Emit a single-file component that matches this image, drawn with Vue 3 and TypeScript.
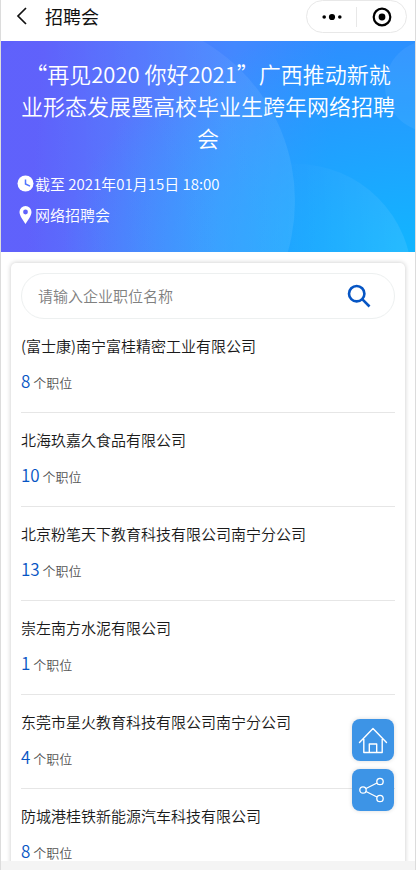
<script setup lang="ts">
import { ref } from 'vue'

interface Company {
  name: string
  jobs: number
}

const keyword = ref('')

const companies: Company[] = [
  { name: '(富士康)南宁富桂精密工业有限公司', jobs: 8 },
  { name: '北海玖嘉久食品有限公司', jobs: 10 },
  { name: '北京粉笔天下教育科技有限公司南宁分公司', jobs: 13 },
  { name: '崇左南方水泥有限公司', jobs: 1 },
  { name: '东莞市星火教育科技有限公司南宁分公司', jobs: 4 },
  { name: '防城港桂铁新能源汽车科技有限公司', jobs: 8 },
]
</script>

<template>
  <div class="page" lang="zh-CN">
    <header class="nav">
      <button class="back" type="button" aria-label="返回">
        <svg width="12" height="18" viewBox="0 0 12 18" fill="none" stroke="#111" stroke-width="1.7">
          <path d="M10 1 2 9l8 8" />
        </svg>
      </button>
      <span class="nav-title">招聘会</span>
      <div class="capsule">
        <button type="button" aria-label="更多">
          <svg width="20" height="8" viewBox="0 0 20 8" fill="#000">
            <circle cx="2.2" cy="4" r="1.8" />
            <circle cx="10" cy="4" r="3.1" />
            <circle cx="17.8" cy="4" r="1.8" />
          </svg>
        </button>
        <button type="button" aria-label="关闭">
          <svg width="20" height="20" viewBox="0 0 20 20">
            <circle cx="10" cy="10" r="8.3" fill="none" stroke="#000" stroke-width="2.2" />
            <circle cx="10" cy="10" r="3.4" fill="#000" />
          </svg>
        </button>
      </div>
    </header>

    <section class="banner">
      <svg class="bubbles" viewBox="0 0 416 211" preserveAspectRatio="xMidYMid slice" aria-hidden="true">
        <defs>
          <linearGradient id="bubble" x1="0" y1="0" x2="1" y2="0">
            <stop offset="0.3" stop-color="#fff" stop-opacity="0.01" />
            <stop offset="1" stop-color="#fff" stop-opacity="0.08" />
          </linearGradient>
          <linearGradient id="bubble-low" x1="0" y1="0" x2="1" y2="0">
            <stop offset="0.45" stop-color="#fff" stop-opacity="0" />
            <stop offset="1" stop-color="#fff" stop-opacity="0.09" />
          </linearGradient>
        </defs>
        <circle cx="110" cy="160" r="185" fill="url(#bubble)" />
        <circle cx="296" cy="239" r="116" fill="url(#bubble-low)" />
        <circle cx="431" cy="45" r="46" fill="#fff" fill-opacity="0.06" />
      </svg>
      <h1>“再见2020 你好2021”广西推动新就业形态发展暨高校毕业生跨年网络招聘会</h1>
      <p class="meta">
        <svg width="18" height="18" viewBox="0 0 18 18">
          <circle cx="8.500" cy="8.500" r="8" fill="#fff" />
          <path d="M8.500 4.500v4.500l4.500 2.200" fill="none" stroke="#5075ff" stroke-width="1.5" />
        </svg>
        截至 2021年01月15日 18:00
      </p>
      <p class="meta">
        <svg width="18" height="18" viewBox="0 0 18 18">
          <path fill="#fff" fill-rule="evenodd" d="M8.500 0a6 6 0 0 0-6 6c0 4 4 8.500 6 12 2-3.500 6-8 6-12a6 6 0 0 0-6-6Zm0 3.600a2.400 2.400 0 1 1 0 4.800 2.400 2.400 0 0 1 0-4.800Z" />
        </svg>
        网络招聘会
      </p>
    </section>

    <main class="content">
      <div class="card">
        <form class="search" role="search" @submit.prevent>
          <input v-model="keyword" type="text" placeholder="请输入企业职位名称" aria-label="请输入企业职位名称" />
          <button type="submit" aria-label="搜索">
            <svg width="24" height="24" viewBox="0 0 24 24" fill="none" stroke="#0655c4" stroke-width="2.6">
              <circle cx="9.700" cy="9.700" r="7.700" />
              <path d="m15.200 15.200 7.300 7.300" />
            </svg>
          </button>
        </form>
        <ul class="list">
          <li v-for="company in companies" :key="company.name">
            <a href="#">
              <span class="name">{{ company.name }}</span>
              <span class="count"><b>{{ company.jobs }}</b> 个职位</span>
            </a>
          </li>
        </ul>
      </div>
    </main>

    <div class="bottom"></div>

    <nav class="floating">
      <a href="#" aria-label="首页">
        <svg width="30" height="30" viewBox="0 0 30 30" fill="none" stroke="#fff" stroke-width="1.4" stroke-linejoin="round" stroke-linecap="round">
          <path d="M1.500 17.500 15 3.500l13.500 14M5.800 14v13.500h18.400V14M11.300 27.500v-8.500h7.400v8.500" />
        </svg>
      </a>
      <button type="button" aria-label="分享">
        <svg width="30" height="30" viewBox="0 0 30 30" fill="none" stroke="#fff" stroke-width="1.3">
          <circle cx="5" cy="15" r="3.200" />
          <circle cx="22" cy="6.500" r="3.200" />
          <circle cx="22" cy="23.500" r="3.200" />
          <path d="m8 13.500 11-5.500M8 16.500l11 5.500" />
        </svg>
      </button>
    </nav>
  </div>
</template>

<style>
body {
  background: #fff;
}
</style>

<style scoped>
.page {
  box-sizing: border-box;
  display: flex;
  flex-direction: column;
  height: 100vh;
  overflow: hidden;
  border: solid #dcdcdc;
  border-width: 0 1px;
  font-family: "Noto Sans CJK SC", sans-serif;
  font-weight: 350;
  color: #1a1a1a;
}

button {
  display: flex;
  align-items: center;
  justify-content: center;
  padding: 0;
  border: 0;
  background: none;
  cursor: pointer;
}

a {
  color: inherit;
  text-decoration: none;
}

svg {
  display: block;
  flex: none;
}

.nav {
  box-sizing: border-box;
  flex: none;
  display: flex;
  align-items: flex-start;
  height: 41px;
  padding: 0 8px 0 14px;
}

.back {
  width: 14px;
  height: 32px;
}

.nav-title {
  flex: 1;
  padding-left: 16px;
  font-size: 18px;
  font-weight: 400;
  line-height: 32px;
  color: #111;
}

.capsule {
  box-sizing: border-box;
  display: flex;
  align-items: center;
  width: 101px;
  height: 33px;
  border: 1px solid #e8e8e8;
  border-radius: 17px;
}

.capsule button {
  flex: 1;
  height: 20px;
}

.capsule button + button {
  border-left: 1px solid #e8e8e8;
}

.banner {
  position: relative;
  flex: none;
  padding: 16px 16px 22px;
  background:
    radial-gradient(ellipse 85% 110% at 100% 100%, rgba(14, 186, 255, 0.9) 0%, rgba(14, 186, 255, 0) 100%),
    linear-gradient(95deg, #5e60fb 10%, #4388ff 54%, #2f8cff 78%);
  color: #fff;
}

.bubbles {
  position: absolute;
  inset: 0;
  width: 100%;
  height: 100%;
}

.banner h1 {
  position: relative;
  margin: 0 0 15px;
  font-size: 22px;
  font-weight: inherit;
  line-height: 32px;
  text-align: center;
}

.meta {
  position: relative;
  display: flex;
  align-items: center;
  margin: 0;
  font-size: 15px;
  line-height: 31px;
}

.content {
  flex: 1;
  min-height: 0;
  padding: 11px 10px 0;
  overflow: hidden;
}

.card {
  padding: 10px 10px 0;
  border-radius: 5px;
  background: #fff;
  box-shadow: 0 0 5px rgba(0, 0, 0, 0.22);
}

.search {
  box-sizing: border-box;
  display: flex;
  align-items: center;
  height: 46px;
  padding: 0 23px 0 16px;
  border: 1px solid #edf0f0;
  border-radius: 24px;
}

.search input {
  flex: 1;
  min-width: 0;
  padding: 0;
  border: 0;
  outline: 0;
  background: none;
  font-family: inherit;
  font-size: 15px;
  font-weight: inherit;
  line-height: 24px;
  color: #222;
}

.search input::placeholder {
  color: #808080;
  opacity: 1;
}

.list {
  margin: 0;
  padding: 0;
  list-style: none;
}

.list li {
  border-bottom: 1px solid #e6e6e6;
}

.list a {
  display: flex;
  flex-direction: column;
  gap: 11px;
  padding: 15px 0 17px;
}

.name {
  font-size: 15px;
  line-height: 24px;
}

.count {
  font-size: 13px;
  line-height: 24px;
  color: #555;
}

.count b {
  font-size: 17px;
  font-weight: inherit;
  color: #0655c4;
}

.bottom {
  flex: none;
  height: 9px;
  background: #f4f4f4;
}

.floating {
  position: fixed;
  right: 22px;
  bottom: 59px;
  display: flex;
  flex-direction: column;
  gap: 8px;
}

.floating a,
.floating button {
  display: flex;
  align-items: center;
  justify-content: center;
  width: 42px;
  height: 42px;
  border-radius: 8px;
  background: #3d94e6;
  box-shadow: 0 0 4px rgba(0, 0, 0, 0.15);
}
</style>
